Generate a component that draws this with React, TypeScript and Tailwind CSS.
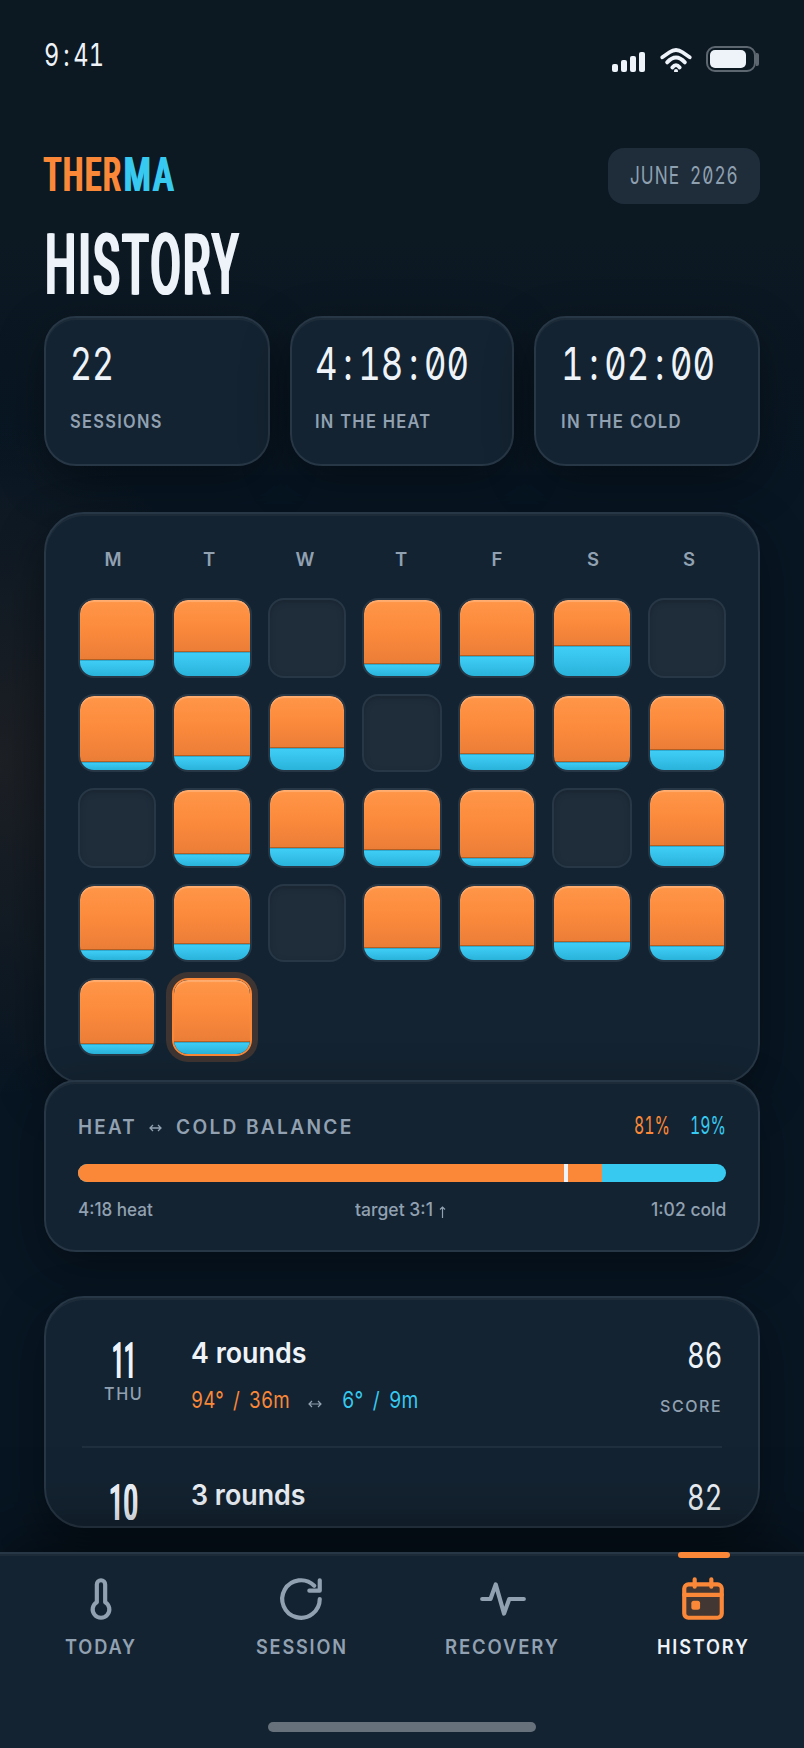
import { useLayoutEffect, useRef, useState, type ReactNode } from 'react'
import { clsx } from 'clsx'

// Cold share per day in px of fill height, null = rest day
const DAYS: (number | null)[] = [
  16, 24, null, 12, 20, 30, null,
  8, 14, 22, null, 16, 8, 20,
  null, 12, 18, 16, 8, null, 20,
  10, 16, null, 12, 14, 18, 14,
  10, 12
]
const TODAY_INDEX = 29
const WEEKDAYS = ['M', 'T', 'W', 'T', 'F', 'S', 'S']

const NUM = "font-['Inter',sans-serif] font-normal [font-feature-settings:'tnum','zero']"
const DISPLAY = "font-['Roboto',sans-serif] font-medium"
const LABEL = 'font-semibold tracking-[0.08em] text-[#91a1b1]'
const CARD =
  'border-2 border-[#283745] bg-[#142331] shadow-[inset_0_2px_0_rgba(255,255,255,0.04),0_16px_48px_rgba(0,0,0,0.4)]'

// Squeezes a single line of text into the width of its box
function Fit({ className, children }: { className: string; children: ReactNode }) {
  const box = useRef<HTMLSpanElement>(null)
  const line = useRef<HTMLSpanElement>(null)
  const [scale, setScale] = useState(1)

  useLayoutEffect(() => {
    if (!box.current || !line.current) return
    setScale(box.current.clientWidth / line.current.offsetWidth)
  }, [children])

  return (
    <span ref={box} className={clsx('block shrink-0 whitespace-nowrap', className)}>
      <span ref={line} className="inline-block origin-left" style={{ transform: `scaleX(${scale})` }}>
        {children}
      </span>
    </span>
  )
}

// Gives the colons of a clock value the same advance as its digits
function Clock({ value }: { value: string }) {
  return (
    <>
      {value.split(/(:)/).map((part, i) =>
        part === ':' ? (
          <span key={i} className="px-[0.165em]">
            :
          </span>
        ) : (
          part
        )
      )}
    </>
  )
}

function StatusBar() {
  return (
    <div className="flex h-[148px] items-start justify-between pl-11 pr-[45px]">
      <Fit className={clsx(NUM, 'mt-[35px] w-[60px] text-[31px] leading-10 text-[#eef3f9]')}>
        <Clock value="9:41" />
      </Fit>
      <div className="mt-[46px] flex items-end">
        <div className="flex items-end gap-[3px]">
          <span className="h-2 w-1.5 rounded-[2px] bg-[#eef3f9]" />
          <span className="h-3 w-1.5 rounded-[2px] bg-[#eef3f9]" />
          <span className="h-4 w-1.5 rounded-[2px] bg-[#eef3f9]" />
          <span className="h-5 w-1.5 rounded-[2px] bg-[#eef3f9]" />
        </div>
        <svg className="ml-[15px] h-6 w-8" viewBox="0 0 32 24" fill="none" stroke="#eef3f9" strokeWidth="3.8" strokeLinecap="round">
          <path d="M2.3 9.3 L9.5 4.2Q16 -0.3 22.5 4.2L29.7 9.3" />
          <path d="M7.1 14.4Q16 4.6 24.9 14.4" />
          <path d="M12.3 19.5Q16 14.6 19.7 19.5" />
          <circle cx="16" cy="23" r="2" fill="#eef3f9" stroke="none" />
        </svg>
        <div className="ml-3.5 flex items-center">
          <div className="h-[26px] w-[50px] rounded-[9px] border-2 border-[#5d6770] p-0.5">
            <div className="h-[18px] w-9 rounded-[5px] bg-[#eef3f9]" />
          </div>
          <span className="h-[13px] w-[3px] rounded-r-[2px] bg-[#5d6770]" />
        </div>
      </div>
    </div>
  )
}

function Header() {
  return (
    <header className="px-11">
      <div className="flex h-14 items-center justify-between">
        <div
          className={clsx(
            DISPLAY,
            'flex gap-px text-[49px] leading-[56px] tracking-[0.08em] [text-shadow:0.035em_0_0_currentColor,-0.035em_0_0_currentColor]'
          )}
        >
          <Fit className="-mt-[2px] w-[79px] text-[#fb8838]">THER</Fit>
          <Fit className="-mt-[2px] w-[52px] text-[#37c9f0]">MA</Fit>
        </div>
        <div className="flex h-14 w-[152px] items-center rounded-2xl bg-[#1f2d3b] pb-0.5 pl-[22px]">
          <Fit className={clsx(NUM, 'w-[109px] text-[24.5px] leading-[30px] tracking-[0.06em] text-[#8fa0b0] [word-spacing:6px]')}>
            JUNE 2026
          </Fit>
        </div>
      </div>
      <h1 className="flex h-28 items-center pt-[9px]">
        <Fit
          className={clsx(
            DISPLAY,
            'ml-px w-[196px] text-[86px] leading-[90px] tracking-[0.05em] text-[#eef3f9] [text-shadow:0.024em_0_0_currentColor,-0.024em_0_0_currentColor]'
          )}
        >
          HISTORY
        </Fit>
      </h1>
    </header>
  )
}

function StatCard({ value, label, valueClass, labelClass }: { value: string; label: string; valueClass: string; labelClass: string }) {
  return (
    <div className={clsx(CARD, 'h-[150px] rounded-[32px] pl-6 pt-[25px]')}>
      <Fit className={clsx(NUM, valueClass, 'text-[45.5px] leading-[42px] text-[#eef3f9]')}>
        <Clock value={value} />
      </Fit>
      <Fit className={clsx(LABEL, labelClass, 'mt-[25px] text-[18px] leading-6')}>{label}</Fit>
    </div>
  )
}

function DayCell({ cold, today }: { cold: number | null; today: boolean }) {
  if (cold === null) {
    return (
      <div className="rounded-[16px] border-2 border-[#283745] bg-[#1f2d3b] shadow-[inset_0_2px_6px_rgba(0,0,0,0.2)]" />
    )
  }

  return (
    <div
      className={clsx(
        'rounded-[16px] border-2',
        today ? 'border-[#fb8838] shadow-[0_0_0_6px_#3e3532]' : 'border-[#283745]'
      )}
    >
      <div className="flex h-full flex-col overflow-hidden rounded-[14px]">
        <div className="flex-1 rounded-t-[14px] bg-linear-to-b from-[#ff9648] via-[#fc8a3c] to-[#ea7d37] shadow-[inset_0_2px_1px_rgba(255,255,255,0.22),inset_0_-1px_0_rgba(120,60,10,0.45)]" />
        <div
          className="bg-linear-to-b from-[#40cff8] to-[#29b3db] shadow-[inset_0_1px_0_rgba(0,60,80,0.25)]"
          style={{ height: cold }}
        />
      </div>
    </div>
  )
}

function Calendar() {
  return (
    <section className={clsx(CARD, 'mt-[46px] h-[572px] rounded-[40px] px-8 pt-[33px]')}>
      <div className="grid grid-cols-7 gap-6">
        {WEEKDAYS.map((day, i) => (
          <span key={i} className="-ml-0.5 text-center text-[18.5px] font-semibold leading-6 text-[#91a1b1]">
            {day}
          </span>
        ))}
      </div>
      <div className="mt-[27px] grid grid-cols-[78px_80px_78px_80px_78px_80px_78px] grid-rows-[80px_78px_80px_78px_78px] gap-4">
        {DAYS.map((cold, i) => (
          <DayCell key={i} cold={cold} today={i === TODAY_INDEX} />
        ))}
      </div>
    </section>
  )
}

function Balance() {
  return (
    <section className={clsx(CARD, '-mt-1 h-[172px] rounded-[32px] px-8 pt-[26px]')}>
      <div className="flex items-center justify-between">
        <div className="flex items-center pt-[5px] text-[19.5px] font-semibold leading-7 tracking-[0.12em] text-[#91a1b1]">
          <Fit className="w-[59px]">HEAT</Fit>
          <svg className="ml-3 mt-0.5 h-2 w-[13px]" viewBox="0 0 13 8" fill="none" stroke="currentColor" strokeWidth="1.3">
            <path d="M1 4h11M4 1 1 4l3 3M9 1l3 3-3 3" />
          </svg>
          <Fit className="ml-3.5 w-[178px]">COLD BALANCE</Fit>
        </div>
        <div className={clsx(NUM, 'flex gap-5 text-[24.5px] leading-7')}>
          <Fit className="w-9 text-[#fb8838]">81%</Fit>
          <Fit className="w-9 text-[#37c9f0]">19%</Fit>
        </div>
      </div>
      <div className="relative mt-[23px] flex h-[18px] overflow-hidden rounded-full bg-[#37c9f0]">
        <div className="w-[524px] bg-[#fb8838]" />
        <span className="absolute left-3/4 top-0 h-full w-1 bg-[#eef3f9]" />
      </div>
      <div className="mt-[14px] flex justify-between text-[18px] font-medium leading-7 text-[#91a1b1]">
        <Fit className="w-[75px]">4:18 heat</Fit>
        <div className="mr-[3px] flex items-center">
          <Fit className="w-[78px]">target 3:1</Fit>
          <svg className="ml-1.5 mt-1 h-3 w-[7px]" viewBox="0 0 7 12" fill="none" stroke="currentColor" strokeWidth="1.2">
            <path d="M3.5 12V1M1 3.5 3.5 1 6 3.5" />
          </svg>
        </div>
        <Fit className="w-[75px]">1:02 cold</Fit>
      </div>
    </section>
  )
}

interface Session {
  date: string
  dateClass: string
  rounds: string
  score: string
  detail?: { day: string; heat: string; cold: string }
}

const SESSIONS: Session[] = [
  {
    date: '11',
    dateClass: 'w-[24px] ml-[4px]',
    rounds: '4 rounds',
    score: '86',
    detail: { day: 'THU', heat: '94° / 36m', cold: '6° / 9m' }
  },
  { date: '10', dateClass: 'w-[29px] ml-[3px]', rounds: '3 rounds', score: '82' }
]

function SessionRow({ session }: { session: Session }) {
  const { detail } = session

  return (
    <div className="flex h-[142px] border-b-2 border-[#202f3d] pt-8">
      <div className="flex w-20 flex-col items-center">
        <Fit
          className={clsx(
            DISPLAY,
            session.dateClass,
            'mt-[5px] text-[50px] leading-9 text-[#eef3f9] [text-shadow:0.02em_0_0_currentColor,-0.02em_0_0_currentColor]'
          )}
        >
          {session.date}
        </Fit>
        {detail && (
          <Fit className="ml-0.5 mt-[3px] w-[39px] text-[17px] font-medium leading-6 tracking-[0.1em] text-[#91a1b1]">{detail.day}</Fit>
        )}
      </div>
      <div className="ml-[29px] flex-1">
        <Fit className="-mt-[3px] w-[115px] text-[28px] font-semibold leading-9 text-[#eef3f9]">{session.rounds}</Fit>
        {detail && (
          <div className={clsx(NUM, 'mt-[15px] flex items-center text-[22.5px] leading-7 [word-spacing:5px]')}>
            <Fit className="w-[99px] text-[#fb8838]">{detail.heat}</Fit>
            <svg className="ml-[18px] mt-[8px] h-2 w-[14px] text-[#91a1b1]" viewBox="0 0 14 8" fill="none" stroke="currentColor" strokeWidth="1.2">
              <path d="M1 4h12M4 1 1 4l3 3M10 1l3 3-3 3" />
            </svg>
            <Fit className="ml-5 w-[76px] text-[#37c9f0]">{detail.cold}</Fit>
          </div>
        )}
      </div>
      <div className="flex flex-col items-end">
        <Fit className={clsx(NUM, '-mt-[3px] w-[35px] text-[35px] leading-10 text-[#eef3f9]')}>{session.score}</Fit>
        {detail && (
          <Fit className="mt-[19px] w-[62px] text-[16.5px] font-medium leading-6 tracking-[0.1em] text-[#91a1b1]">SCORE</Fit>
        )}
      </div>
    </div>
  )
}

function ThermometerIcon() {
  return <path d="M14 5v8.54a4 4 0 1 1-4 0V5a2 2 0 0 1 4 0Z" />
}

function SessionIcon() {
  return (
    <>
      <path d="M21 12a9 9 0 1 1-2.64-6.36" />
      <path d="M21 3v5h-5" />
    </>
  )
}

function PulseIcon() {
  return <path d="M2 12h4l2.5-7 4 14 2.5-7h7" />
}

function CalendarIcon() {
  return (
    <>
      <rect x="3" y="5" width="18" height="16" rx="2" fill="currentColor" fillOpacity="0.2" />
      <path d="M3 10h18M8 2.5v3.6M16 2.5v3.6" />
      <rect x="6.4" y="12.8" width="4.2" height="4.3" rx="1.2" fill="currentColor" stroke="none" />
    </>
  )
}

const TABS = [
  { label: 'TODAY', width: 'w-[72px]', icon: <ThermometerIcon />, iconClass: 'ml-px' },
  { label: 'SESSION', width: 'w-[92px]', icon: <SessionIcon />, iconClass: '-ml-px' },
  { label: 'RECOVERY', width: 'w-[115px]', icon: <PulseIcon />, iconClass: 'ml-px' },
  { label: 'HISTORY', width: 'w-[93px]', icon: <CalendarIcon />, iconClass: '-ml-px', active: true }
]

function TabBar() {
  return (
    <nav className="relative h-[196px] border-t-2 border-[#283745] bg-[#142331] shadow-[inset_0_2px_0_rgba(255,255,255,0.04),0_-16px_60px_rgba(0,0,0,0.5)]">
      <div className="grid grid-cols-4">
        {TABS.map(tab => (
          <div key={tab.label} className="relative flex flex-col items-center pt-5">
            {tab.active && <span className="absolute -top-0.5 h-1.5 w-[52px] rounded-full bg-[#fb8838]" />}
            <svg
              className={clsx('size-[50px]', tab.iconClass, tab.active ? 'text-[#fb8838]' : 'text-[#91a1b1]')}
              viewBox="0 0 24 24"
              fill="none"
              stroke="currentColor"
              strokeWidth="2"
              strokeLinecap="round"
              strokeLinejoin="round"
            >
              {tab.icon}
            </svg>
            <Fit
              className={clsx(
                tab.width,
                'mt-[9px] text-[19.5px] font-semibold leading-7 tracking-[0.1em]',
                tab.active ? 'text-[#eef3f9]' : 'text-[#91a1b1]'
              )}
            >
              {tab.label}
            </Fit>
          </div>
        ))}
      </div>
      {/* Home indicator */}
      <div className="absolute bottom-4 left-1/2 h-2.5 w-[268px] -translate-x-1/2 rounded-full bg-[#66717b]" />
    </nav>
  )
}

export default function App() {
  return (
    <div className="flex h-[1748px] w-[804px] flex-col overflow-hidden bg-[#081623] bg-[radial-gradient(ellipse_240px_340px_at_0px_760px,rgba(251,136,56,0.085),transparent),linear-gradient(to_bottom,#0c1822_0px,#0c1822_240px,#081623_480px)] font-['Inter',sans-serif]">
      <StatusBar />
      <Header />
      <main className="flex min-h-0 flex-1 flex-col px-11">
        <div className="grid grid-cols-[226px_224px_226px] gap-5">
          <StatCard value="22" label="SESSIONS" valueClass="w-11" labelClass="w-[93px]" />
          <StatCard value="4:18:00" label="IN THE HEAT" valueClass="-ml-px w-[154px]" labelClass="-ml-px w-[117px]" />
          <StatCard value="1:02:00" label="IN THE COLD" valueClass="ml-px w-[154px]" labelClass="ml-px w-[121px]" />
        </div>
        <Calendar />
        <Balance />
        <section className={clsx(CARD, 'mt-11 h-[232px] overflow-hidden rounded-[40px] px-9 pt-2')}>
          {SESSIONS.map(session => (
            <SessionRow key={session.date} session={session} />
          ))}
        </section>
      </main>
      <TabBar />
    </div>
  )
}
